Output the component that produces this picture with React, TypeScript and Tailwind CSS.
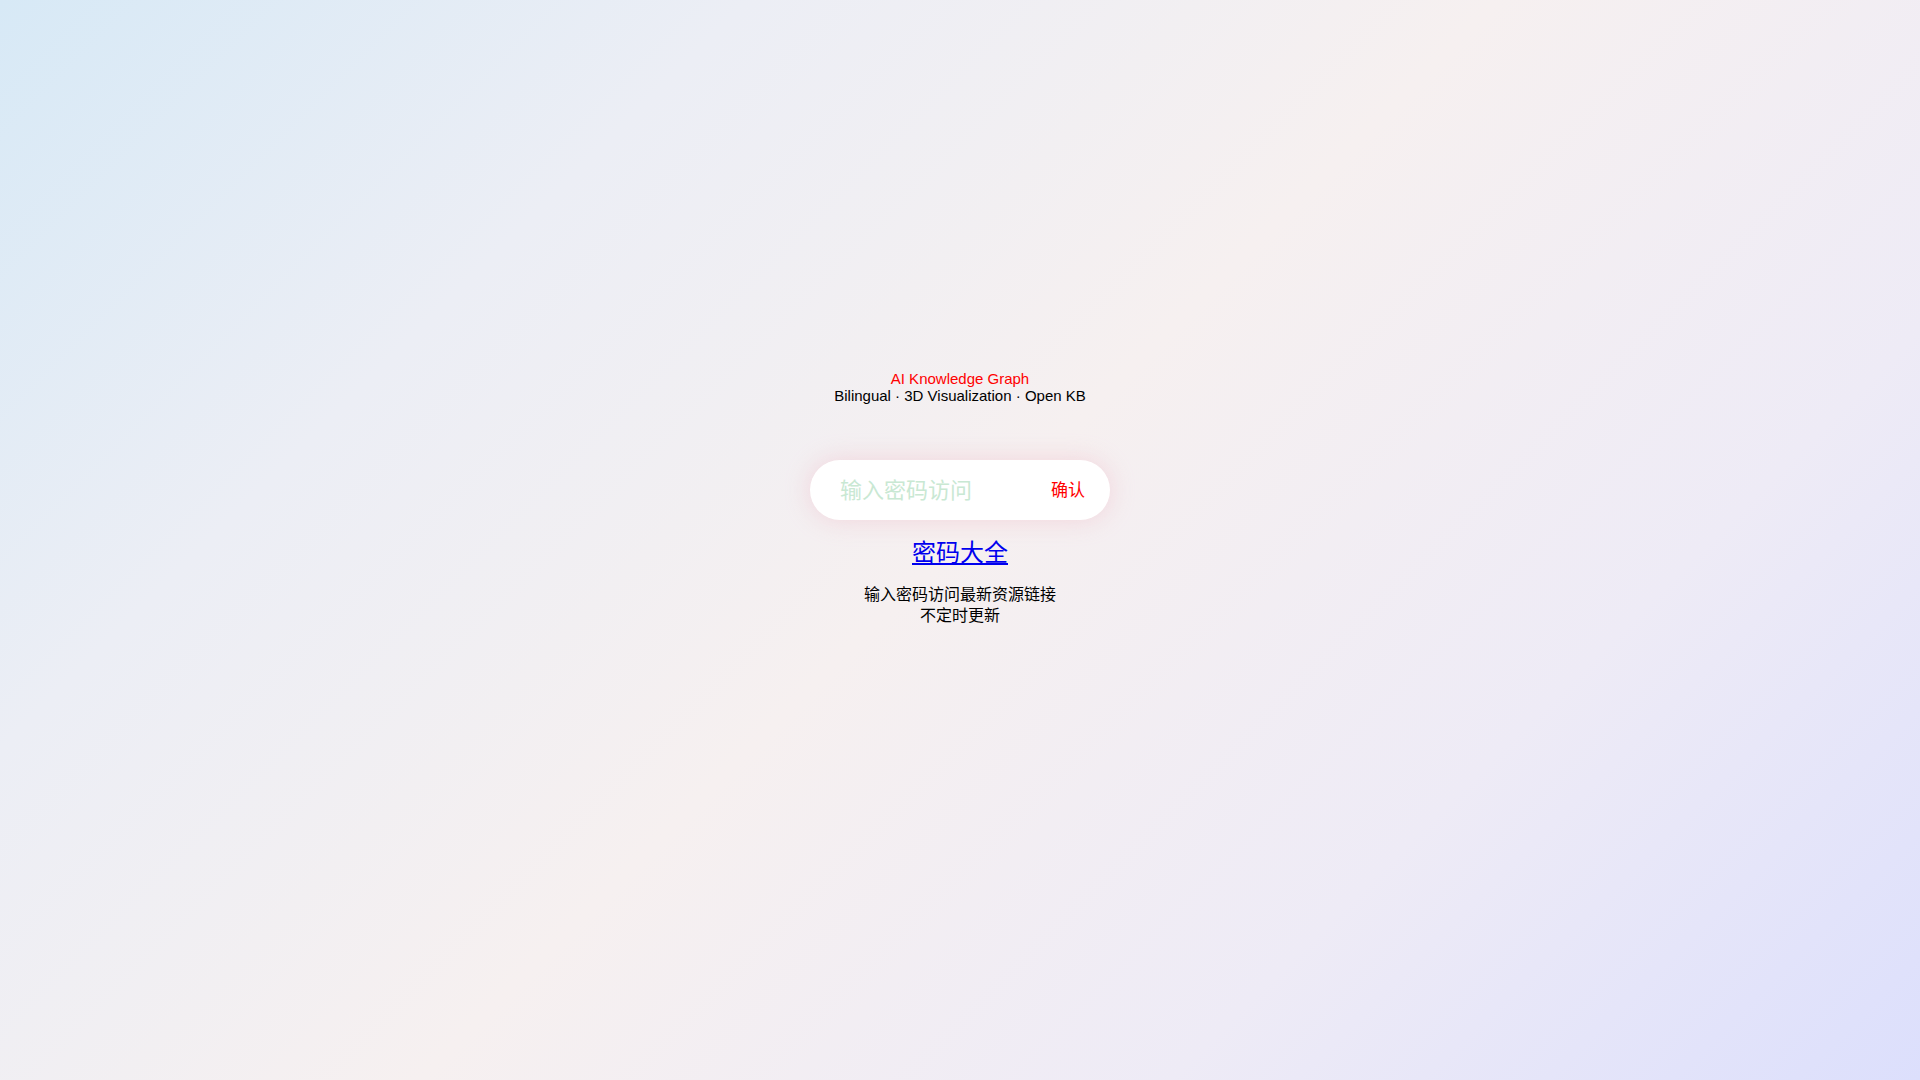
import React, { useState } from 'react';

const App: React.FC = () => {
  const [password, setPassword] = useState('');

  return (
    <div
      className="min-h-screen w-full flex flex-col items-center pt-[370px] bg-[linear-gradient(135deg,#d7e9f6_0%,#eceef5_25%,#f6f0f0_50%,#eeebf6_75%,#dcdffc_100%)]"
      style={{ fontFamily: '"Liberation Sans", Arial, "Noto Sans CJK SC", sans-serif' }}
    >
      <div className="flex flex-col items-center text-[15px] leading-[17px]">
        <div className="text-[#ff0000]">AI Knowledge Graph</div>
        <div className="text-[#000]">Bilingual · 3D Visualization · Open KB</div>
      </div>

      <div className="mt-[56px] w-[300px] h-[60px] bg-white rounded-full flex items-center pl-[30px] pr-[25px] shadow-[0_0_24px_rgba(240,180,195,0.45)]">
        <input
          type="password"
          value={password}
          onChange={(e) => setPassword(e.target.value)}
          placeholder="输入密码访问"
          className="flex-1 min-w-0 bg-transparent outline-none text-[22px] text-[#333] placeholder:text-[#c9e8d3]"
        />
        <button className="text-[17px] text-[#ff0000] cursor-pointer pt-[2px]">确认</button>
      </div>

      <a href="#" className="mt-[19px] text-[24px] leading-[28px] text-[#0000ee] underline">密码大全</a>

      <div className="mt-[17px] flex flex-col items-center text-[16px] leading-[21px] text-[#000]">
        <div>输入密码访问最新资源链接</div>
        <div>不定时更新</div>
      </div>
    </div>
  );
};

export default App;
